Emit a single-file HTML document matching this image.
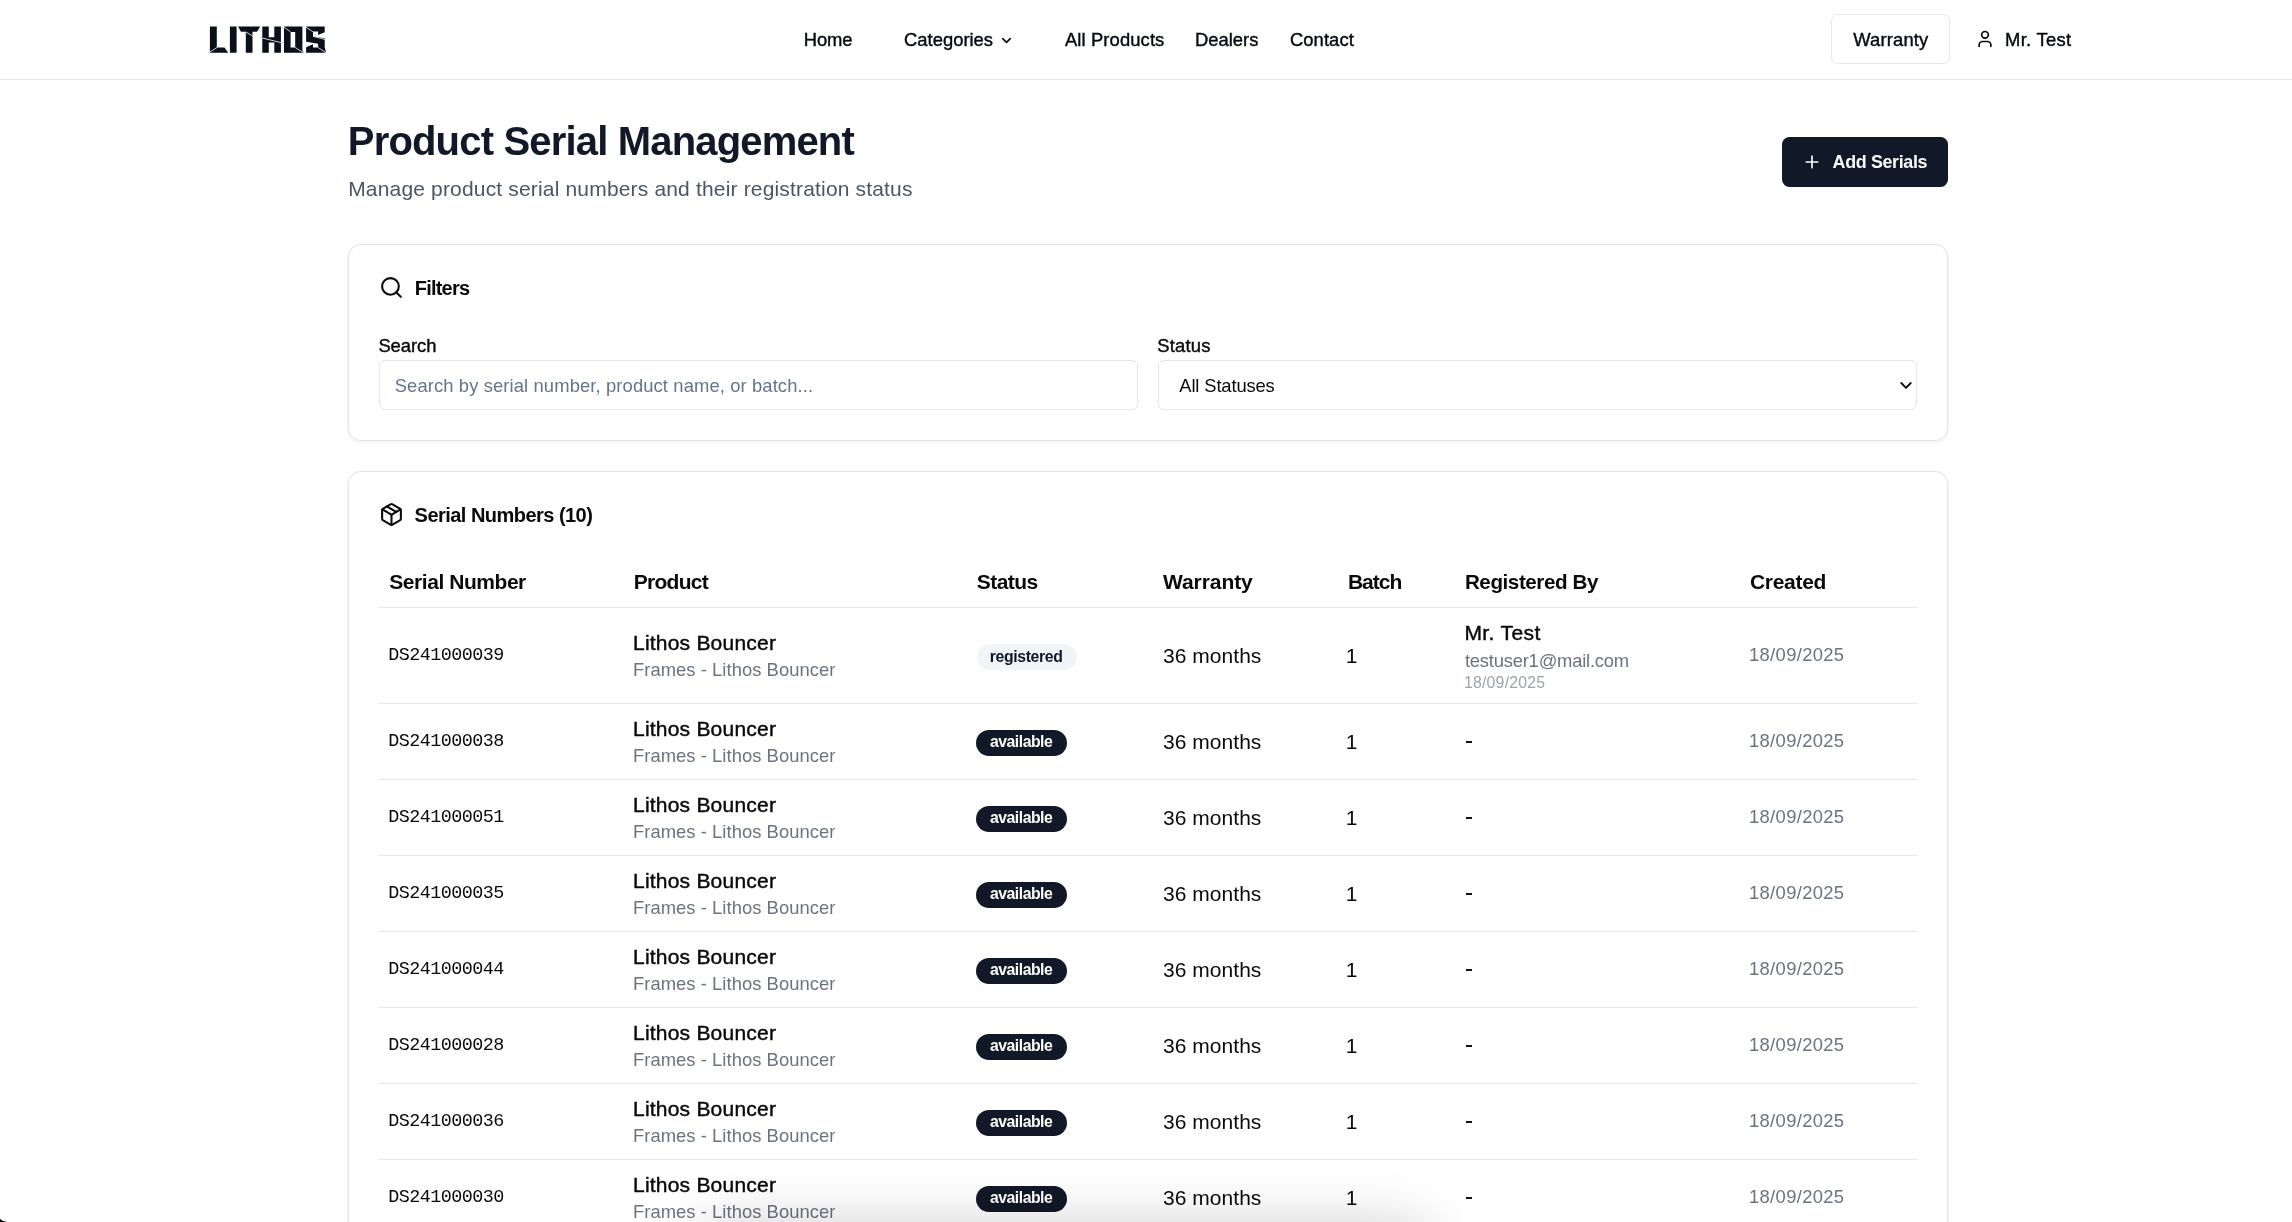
<!DOCTYPE html>
<html><head><meta charset="utf-8"><style>
html,body{margin:0;padding:0;}
body{width:2292px;height:1222px;overflow:hidden;position:relative;background:#fff;font-family:"Liberation Sans",sans-serif;}
#root{position:absolute;left:0;top:0;width:2292px;height:1222px;will-change:transform;}
.abs{position:absolute;}
.t{position:absolute;white-space:nowrap;}
.hl{position:absolute;left:379px;width:1538px;height:1px;background:#e5e7eb;}
.badge{position:absolute;border-radius:20px;}
.dash{position:absolute;left:1465.5px;width:6.6px;height:2px;background:#111;}
.card{position:absolute;left:348px;width:1598px;border:1px solid #e4e4e4;border-radius:13px;background:#fff;box-shadow:0 1px 4px rgba(0,0,0,0.07);}
.inp{position:absolute;border:1px solid #e3e7ec;border-radius:6px;background:#fff;box-sizing:border-box;}
</style></head><body><div id="root">
<div class="abs" style="left:0;top:0;width:2292px;height:79px;border-bottom:1px solid #e5e7eb;background:#fff"></div>
<svg class="abs" style="left:208px;top:26px" width="120" height="28" viewBox="0 0 120 28" fill="#0b0f19">
<path d="M1.9 0.6H8.8V21.4H16.5L20.2 26.8H0.1L1.9 25.7Z M21.9 0.6H28.6V26.8H21.9Z M30.1 0.6H52.3L48.9 5.8H44.5V26.8H37.8V5.8H33Z M54.3 0.6H60.8V11.3H66.3V0.6H72.9V16.2L74.6 16.6L72.9 17V26.8H66.3V16.6H60.8V26.8H54.3V12.3L52.6 11.5L54.3 11.3Z M98.1 0.6H116.7V6.2L110.1 8.9V5.5H105V10.3L116.7 12.3V21.5L118.1 26.8H98.1V21.2L105 18.3V21.5H110.1V17.8L98.1 15.8Z"/>
<path fill-rule="evenodd" d="M76 0.6H94.4V24.5L95.9 26.8H76Z M82.6 6H87.2V21.5H82.6Z"/>
<g stroke="#fff" stroke-width="0.8" stroke-linecap="butt"><line x1="0" y1="27.3" x2="9.4" y2="21.2"/><line x1="37.6" y1="5.9" x2="44.8" y2="10.1"/><line x1="52.6" y1="11.6" x2="74.6" y2="17"/><line x1="75.4" y1="0.7" x2="82.6" y2="5.9"/><line x1="87.2" y1="21.5" x2="96" y2="27"/><line x1="97.4" y1="0.8" x2="105" y2="5.8"/><line x1="105" y1="10.4" x2="116.8" y2="13.4"/><line x1="110.1" y1="21.5" x2="118.3" y2="26.9"/></g>
</svg>
<svg class="abs" style="left:998.7px;top:32.9px" width="15" height="15" viewBox="0 0 24 24" fill="none" stroke="#060912" stroke-width="2.6" stroke-linecap="round" stroke-linejoin="round"><path d="m6 9 6 6 6-6"/></svg>
<div class="abs" style="left:1831px;top:14px;width:119px;height:50px;box-sizing:border-box;border:1px solid #e5e7eb;border-radius:6.5px"></div>
<svg class="abs" style="left:1974.8px;top:29.2px" width="20" height="20" viewBox="0 0 24 24" fill="none" stroke="#060912" stroke-width="2" stroke-linecap="round" stroke-linejoin="round"><path d="M19 21v-2a4 4 0 0 0-4-4H9a4 4 0 0 0-4 4v2"/><circle cx="12" cy="7" r="4"/></svg>
<div class="abs" style="left:1782px;top:137px;width:166px;height:50px;background:#111827;border-radius:7.5px"></div>
<svg class="abs" style="left:1802px;top:151.7px" width="20" height="20" viewBox="0 0 24 24" fill="none" stroke="#f8fafc" stroke-width="2" stroke-linecap="round" stroke-linejoin="round"><path d="M5 12h14"/><path d="M12 5v14"/></svg>
<div class="card" style="top:244px;height:195px"></div>
<svg class="abs" style="left:378.9px;top:274.9px" width="25" height="25" viewBox="0 0 24 24" fill="none" stroke="#0a0a0a" stroke-width="2" stroke-linecap="round" stroke-linejoin="round"><circle cx="11" cy="11" r="8"/><path d="m21 21-4.3-4.3"/></svg>
<div class="inp" style="left:379px;top:360px;width:759px;height:50px"></div>
<div class="inp" style="left:1158px;top:360px;width:759px;height:50px"></div>
<svg class="abs" style="left:1899px;top:379px" width="14" height="14" viewBox="0 0 14 14" fill="none" stroke="#111" stroke-width="1.9" stroke-linecap="round" stroke-linejoin="round"><path d="M2.3 4 7 8.8 11.7 4"/></svg>
<div class="card" style="top:471px;height:900px"></div>
<svg class="abs" style="left:378.7px;top:501.8px" width="25" height="25" viewBox="0 0 24 24" fill="none" stroke="#0a0a0a" stroke-width="2" stroke-linecap="round" stroke-linejoin="round"><path d="M11 21.73a2 2 0 0 0 2 0l7-4A2 2 0 0 0 21 16V8a2 2 0 0 0-1-1.73l-7-4a2 2 0 0 0-2 0l-7 4A2 2 0 0 0 3 8v8a2 2 0 0 0 1 1.73z"/><path d="M12 22V12"/><path d="m3.3 7 7.703 4.734a2 2 0 0 0 1.994 0L20.7 7"/><path d="m7.5 4.27 9 5.15"/></svg>
<div class="hl" style="top:607.0px"></div><div class="hl" style="top:703.0px"></div><div class="hl" style="top:779.0px"></div><div class="hl" style="top:855.0px"></div><div class="hl" style="top:931.0px"></div><div class="hl" style="top:1007.0px"></div><div class="hl" style="top:1083.0px"></div><div class="hl" style="top:1159.0px"></div>
<div class="badge" style="left:976.6px;top:643.9px;width:100.2px;height:25.8px;background:#f1f5f9"></div><div class="badge" style="left:976px;top:729.5px;width:91.1px;height:26.6px;background:#111827"></div><div class="badge" style="left:976px;top:805.5px;width:91.1px;height:26.6px;background:#111827"></div><div class="badge" style="left:976px;top:881.5px;width:91.1px;height:26.6px;background:#111827"></div><div class="badge" style="left:976px;top:957.5px;width:91.1px;height:26.6px;background:#111827"></div><div class="badge" style="left:976px;top:1033.5px;width:91.1px;height:26.6px;background:#111827"></div><div class="badge" style="left:976px;top:1109.5px;width:91.1px;height:26.6px;background:#111827"></div><div class="badge" style="left:976px;top:1185.5px;width:91.1px;height:26.6px;background:#111827"></div>
<div class="dash" style="top:741.1px"></div><div class="dash" style="top:817.1px"></div><div class="dash" style="top:893.1px"></div><div class="dash" style="top:969.1px"></div><div class="dash" style="top:1045.2px"></div><div class="dash" style="top:1121.2px"></div><div class="dash" style="top:1197.2px"></div>
<div class="t" style="left:803.70px;top:30.90px;font-size:18.4px;line-height:18.4px;font-weight:400;color:#060912;letter-spacing:-0.067px;font-family:'Liberation Sans';-webkit-text-stroke:0.4px #060912">Home</div>
<div class="t" style="left:904.10px;top:30.90px;font-size:18.4px;line-height:18.4px;font-weight:400;color:#060912;letter-spacing:0.000px;font-family:'Liberation Sans';-webkit-text-stroke:0.4px #060912">Categories</div>
<div class="t" style="left:1064.90px;top:30.80px;font-size:18.4px;line-height:18.4px;font-weight:400;color:#060912;letter-spacing:0.118px;font-family:'Liberation Sans';-webkit-text-stroke:0.4px #060912">All Products</div>
<div class="t" style="left:1194.90px;top:30.80px;font-size:18.4px;line-height:18.4px;font-weight:400;color:#060912;letter-spacing:0.017px;font-family:'Liberation Sans';-webkit-text-stroke:0.4px #060912">Dealers</div>
<div class="t" style="left:1289.90px;top:30.80px;font-size:18.4px;line-height:18.4px;font-weight:400;color:#060912;letter-spacing:0.083px;font-family:'Liberation Sans';-webkit-text-stroke:0.4px #060912">Contact</div>
<div class="t" style="left:1853.20px;top:31.20px;font-size:18.4px;line-height:18.4px;font-weight:400;color:#060912;letter-spacing:0.171px;font-family:'Liberation Sans';-webkit-text-stroke:0.4px #060912">Warranty</div>
<div class="t" style="left:2005.10px;top:31.20px;font-size:18.4px;line-height:18.4px;font-weight:400;color:#060912;letter-spacing:0.286px;font-family:'Liberation Sans';-webkit-text-stroke:0.4px #060912">Mr. Test</div>
<div class="t" style="left:347.80px;top:121.00px;font-size:40px;line-height:40px;font-weight:700;color:#111827;letter-spacing:-0.825px;font-family:'Liberation Sans'">Product Serial Management</div>
<div class="t" style="left:348.20px;top:177.70px;font-size:21px;line-height:21px;font-weight:400;color:#4b5563;letter-spacing:0.169px;font-family:'Liberation Sans'">Manage product serial numbers and their registration status</div>
<div class="t" style="left:1832.60px;top:154.10px;font-size:17.9px;line-height:17.9px;font-weight:700;color:#f8fafc;letter-spacing:-0.350px;font-family:'Liberation Sans'">Add Serials</div>
<div class="t" style="left:414.80px;top:277.90px;font-size:20px;line-height:20px;font-weight:700;color:#0a0a0a;letter-spacing:-0.800px;font-family:'Liberation Sans'">Filters</div>
<div class="t" style="left:378.40px;top:337.20px;font-size:18.4px;line-height:18.4px;font-weight:400;color:#0a0a0a;letter-spacing:-0.040px;font-family:'Liberation Sans';-webkit-text-stroke:0.4px #0a0a0a">Search</div>
<div class="t" style="left:394.70px;top:376.90px;font-size:18.4px;line-height:18.4px;font-weight:400;color:#64748b;letter-spacing:0.110px;font-family:'Liberation Sans'">Search by serial number, product name, or batch...</div>
<div class="t" style="left:1157.30px;top:337.10px;font-size:18.4px;line-height:18.4px;font-weight:400;color:#0a0a0a;letter-spacing:0.180px;font-family:'Liberation Sans';-webkit-text-stroke:0.4px #0a0a0a">Status</div>
<div class="t" style="left:1179.30px;top:377.10px;font-size:18.4px;line-height:18.4px;font-weight:400;color:#0a0a0a;letter-spacing:-0.145px;font-family:'Liberation Sans'">All Statuses</div>
<div class="t" style="left:414.60px;top:504.50px;font-size:20px;line-height:20px;font-weight:700;color:#0a0a0a;letter-spacing:-0.533px;font-family:'Liberation Sans'">Serial Numbers (10)</div>
<div class="t" style="left:389.30px;top:571.00px;font-size:21px;line-height:21px;font-weight:700;color:#0a0a0a;letter-spacing:-0.450px;font-family:'Liberation Sans'">Serial Number</div>
<div class="t" style="left:633.70px;top:571.00px;font-size:21px;line-height:21px;font-weight:700;color:#0a0a0a;letter-spacing:-0.717px;font-family:'Liberation Sans'">Product</div>
<div class="t" style="left:976.80px;top:571.00px;font-size:21px;line-height:21px;font-weight:700;color:#0a0a0a;letter-spacing:-0.540px;font-family:'Liberation Sans'">Status</div>
<div class="t" style="left:1163.00px;top:571.00px;font-size:21px;line-height:21px;font-weight:700;color:#0a0a0a;letter-spacing:-0.071px;font-family:'Liberation Sans'">Warranty</div>
<div class="t" style="left:1347.90px;top:571.00px;font-size:21px;line-height:21px;font-weight:700;color:#0a0a0a;letter-spacing:-0.975px;font-family:'Liberation Sans'">Batch</div>
<div class="t" style="left:1464.90px;top:572.00px;font-size:20.6px;line-height:20.6px;font-weight:700;color:#0a0a0a;letter-spacing:-0.417px;font-family:'Liberation Sans'">Registered By</div>
<div class="t" style="left:1750.00px;top:571.00px;font-size:21px;line-height:21px;font-weight:700;color:#0a0a0a;letter-spacing:-0.300px;font-family:'Liberation Sans'">Created</div>
<div class="t" style="left:388.30px;top:647.30px;font-size:18.4px;line-height:18.4px;font-weight:400;color:#0a0a0a;letter-spacing:-0.550px;font-family:'Liberation Mono'">DS241000039</div>
<div class="t" style="left:633.00px;top:631.50px;font-size:21px;line-height:21px;font-weight:400;color:#0a0a0a;letter-spacing:0.215px;font-family:'Liberation Sans';-webkit-text-stroke:0.45px #0a0a0a">Lithos Bouncer</div>
<div class="t" style="left:633.00px;top:661.40px;font-size:18.4px;line-height:18.4px;font-weight:400;color:#6b7280;letter-spacing:0.045px;font-family:'Liberation Sans'">Frames - Lithos Bouncer</div>
<div class="t" style="left:989.80px;top:648.80px;font-size:15.8px;line-height:15.8px;font-weight:700;color:#0f172a;letter-spacing:-0.367px;font-family:'Liberation Sans'">registered</div>
<div class="t" style="left:1163.00px;top:644.70px;font-size:21px;line-height:21px;font-weight:400;color:#0a0a0a;letter-spacing:0.037px;font-family:'Liberation Sans'">36 months</div>
<div class="t" style="left:1345.70px;top:644.70px;font-size:21px;line-height:21px;font-weight:400;color:#0a0a0a;letter-spacing:0.000px;font-family:'Liberation Sans'">1</div>
<div class="t" style="left:1464.50px;top:621.60px;font-size:21px;line-height:21px;font-weight:400;color:#0a0a0a;letter-spacing:0.371px;font-family:'Liberation Sans';-webkit-text-stroke:0.45px #0a0a0a">Mr. Test</div>
<div class="t" style="left:1464.90px;top:652.10px;font-size:18.4px;line-height:18.4px;font-weight:400;color:#6b7280;letter-spacing:-0.212px;font-family:'Liberation Sans'">testuser1@mail.com</div>
<div class="t" style="left:1463.90px;top:674.70px;font-size:15.8px;line-height:15.8px;font-weight:400;color:#9ca3af;letter-spacing:0.244px;font-family:'Liberation Sans'">18/09/2025</div>
<div class="t" style="left:1749.00px;top:646.00px;font-size:18.4px;line-height:18.4px;font-weight:400;color:#6b7280;letter-spacing:0.333px;font-family:'Liberation Sans'">18/09/2025</div>
<div class="t" style="left:388.30px;top:733.30px;font-size:18.4px;line-height:18.4px;font-weight:400;color:#0a0a0a;letter-spacing:-0.550px;font-family:'Liberation Mono'">DS241000038</div>
<div class="t" style="left:633.00px;top:717.50px;font-size:21px;line-height:21px;font-weight:400;color:#0a0a0a;letter-spacing:0.215px;font-family:'Liberation Sans';-webkit-text-stroke:0.45px #0a0a0a">Lithos Bouncer</div>
<div class="t" style="left:633.00px;top:747.40px;font-size:18.4px;line-height:18.4px;font-weight:400;color:#6b7280;letter-spacing:0.045px;font-family:'Liberation Sans'">Frames - Lithos Bouncer</div>
<div class="t" style="left:990.00px;top:734.10px;font-size:15.8px;line-height:15.8px;font-weight:700;color:#ffffff;letter-spacing:-0.500px;font-family:'Liberation Sans'">available</div>
<div class="t" style="left:1163.00px;top:730.70px;font-size:21px;line-height:21px;font-weight:400;color:#0a0a0a;letter-spacing:0.037px;font-family:'Liberation Sans'">36 months</div>
<div class="t" style="left:1345.70px;top:730.70px;font-size:21px;line-height:21px;font-weight:400;color:#0a0a0a;letter-spacing:0.000px;font-family:'Liberation Sans'">1</div>
<div class="t" style="left:1749.00px;top:732.00px;font-size:18.4px;line-height:18.4px;font-weight:400;color:#6b7280;letter-spacing:0.333px;font-family:'Liberation Sans'">18/09/2025</div>
<div class="t" style="left:388.30px;top:809.30px;font-size:18.4px;line-height:18.4px;font-weight:400;color:#0a0a0a;letter-spacing:-0.550px;font-family:'Liberation Mono'">DS241000051</div>
<div class="t" style="left:633.00px;top:793.50px;font-size:21px;line-height:21px;font-weight:400;color:#0a0a0a;letter-spacing:0.215px;font-family:'Liberation Sans';-webkit-text-stroke:0.45px #0a0a0a">Lithos Bouncer</div>
<div class="t" style="left:633.00px;top:823.40px;font-size:18.4px;line-height:18.4px;font-weight:400;color:#6b7280;letter-spacing:0.045px;font-family:'Liberation Sans'">Frames - Lithos Bouncer</div>
<div class="t" style="left:990.00px;top:810.10px;font-size:15.8px;line-height:15.8px;font-weight:700;color:#ffffff;letter-spacing:-0.500px;font-family:'Liberation Sans'">available</div>
<div class="t" style="left:1163.00px;top:806.70px;font-size:21px;line-height:21px;font-weight:400;color:#0a0a0a;letter-spacing:0.037px;font-family:'Liberation Sans'">36 months</div>
<div class="t" style="left:1345.70px;top:806.70px;font-size:21px;line-height:21px;font-weight:400;color:#0a0a0a;letter-spacing:0.000px;font-family:'Liberation Sans'">1</div>
<div class="t" style="left:1749.00px;top:808.00px;font-size:18.4px;line-height:18.4px;font-weight:400;color:#6b7280;letter-spacing:0.333px;font-family:'Liberation Sans'">18/09/2025</div>
<div class="t" style="left:388.30px;top:885.30px;font-size:18.4px;line-height:18.4px;font-weight:400;color:#0a0a0a;letter-spacing:-0.550px;font-family:'Liberation Mono'">DS241000035</div>
<div class="t" style="left:633.00px;top:869.50px;font-size:21px;line-height:21px;font-weight:400;color:#0a0a0a;letter-spacing:0.215px;font-family:'Liberation Sans';-webkit-text-stroke:0.45px #0a0a0a">Lithos Bouncer</div>
<div class="t" style="left:633.00px;top:899.40px;font-size:18.4px;line-height:18.4px;font-weight:400;color:#6b7280;letter-spacing:0.045px;font-family:'Liberation Sans'">Frames - Lithos Bouncer</div>
<div class="t" style="left:990.00px;top:886.10px;font-size:15.8px;line-height:15.8px;font-weight:700;color:#ffffff;letter-spacing:-0.500px;font-family:'Liberation Sans'">available</div>
<div class="t" style="left:1163.00px;top:882.70px;font-size:21px;line-height:21px;font-weight:400;color:#0a0a0a;letter-spacing:0.037px;font-family:'Liberation Sans'">36 months</div>
<div class="t" style="left:1345.70px;top:882.70px;font-size:21px;line-height:21px;font-weight:400;color:#0a0a0a;letter-spacing:0.000px;font-family:'Liberation Sans'">1</div>
<div class="t" style="left:1749.00px;top:884.00px;font-size:18.4px;line-height:18.4px;font-weight:400;color:#6b7280;letter-spacing:0.333px;font-family:'Liberation Sans'">18/09/2025</div>
<div class="t" style="left:388.30px;top:961.30px;font-size:18.4px;line-height:18.4px;font-weight:400;color:#0a0a0a;letter-spacing:-0.550px;font-family:'Liberation Mono'">DS241000044</div>
<div class="t" style="left:633.00px;top:945.50px;font-size:21px;line-height:21px;font-weight:400;color:#0a0a0a;letter-spacing:0.215px;font-family:'Liberation Sans';-webkit-text-stroke:0.45px #0a0a0a">Lithos Bouncer</div>
<div class="t" style="left:633.00px;top:975.40px;font-size:18.4px;line-height:18.4px;font-weight:400;color:#6b7280;letter-spacing:0.045px;font-family:'Liberation Sans'">Frames - Lithos Bouncer</div>
<div class="t" style="left:990.00px;top:962.10px;font-size:15.8px;line-height:15.8px;font-weight:700;color:#ffffff;letter-spacing:-0.500px;font-family:'Liberation Sans'">available</div>
<div class="t" style="left:1163.00px;top:958.70px;font-size:21px;line-height:21px;font-weight:400;color:#0a0a0a;letter-spacing:0.037px;font-family:'Liberation Sans'">36 months</div>
<div class="t" style="left:1345.70px;top:958.70px;font-size:21px;line-height:21px;font-weight:400;color:#0a0a0a;letter-spacing:0.000px;font-family:'Liberation Sans'">1</div>
<div class="t" style="left:1749.00px;top:960.00px;font-size:18.4px;line-height:18.4px;font-weight:400;color:#6b7280;letter-spacing:0.333px;font-family:'Liberation Sans'">18/09/2025</div>
<div class="t" style="left:388.30px;top:1037.30px;font-size:18.4px;line-height:18.4px;font-weight:400;color:#0a0a0a;letter-spacing:-0.550px;font-family:'Liberation Mono'">DS241000028</div>
<div class="t" style="left:633.00px;top:1021.50px;font-size:21px;line-height:21px;font-weight:400;color:#0a0a0a;letter-spacing:0.215px;font-family:'Liberation Sans';-webkit-text-stroke:0.45px #0a0a0a">Lithos Bouncer</div>
<div class="t" style="left:633.00px;top:1051.40px;font-size:18.4px;line-height:18.4px;font-weight:400;color:#6b7280;letter-spacing:0.045px;font-family:'Liberation Sans'">Frames - Lithos Bouncer</div>
<div class="t" style="left:990.00px;top:1038.10px;font-size:15.8px;line-height:15.8px;font-weight:700;color:#ffffff;letter-spacing:-0.500px;font-family:'Liberation Sans'">available</div>
<div class="t" style="left:1163.00px;top:1034.70px;font-size:21px;line-height:21px;font-weight:400;color:#0a0a0a;letter-spacing:0.037px;font-family:'Liberation Sans'">36 months</div>
<div class="t" style="left:1345.70px;top:1034.70px;font-size:21px;line-height:21px;font-weight:400;color:#0a0a0a;letter-spacing:0.000px;font-family:'Liberation Sans'">1</div>
<div class="t" style="left:1749.00px;top:1036.00px;font-size:18.4px;line-height:18.4px;font-weight:400;color:#6b7280;letter-spacing:0.333px;font-family:'Liberation Sans'">18/09/2025</div>
<div class="t" style="left:388.30px;top:1113.30px;font-size:18.4px;line-height:18.4px;font-weight:400;color:#0a0a0a;letter-spacing:-0.550px;font-family:'Liberation Mono'">DS241000036</div>
<div class="t" style="left:633.00px;top:1097.50px;font-size:21px;line-height:21px;font-weight:400;color:#0a0a0a;letter-spacing:0.215px;font-family:'Liberation Sans';-webkit-text-stroke:0.45px #0a0a0a">Lithos Bouncer</div>
<div class="t" style="left:633.00px;top:1127.40px;font-size:18.4px;line-height:18.4px;font-weight:400;color:#6b7280;letter-spacing:0.045px;font-family:'Liberation Sans'">Frames - Lithos Bouncer</div>
<div class="t" style="left:990.00px;top:1114.10px;font-size:15.8px;line-height:15.8px;font-weight:700;color:#ffffff;letter-spacing:-0.500px;font-family:'Liberation Sans'">available</div>
<div class="t" style="left:1163.00px;top:1110.70px;font-size:21px;line-height:21px;font-weight:400;color:#0a0a0a;letter-spacing:0.037px;font-family:'Liberation Sans'">36 months</div>
<div class="t" style="left:1345.70px;top:1110.70px;font-size:21px;line-height:21px;font-weight:400;color:#0a0a0a;letter-spacing:0.000px;font-family:'Liberation Sans'">1</div>
<div class="t" style="left:1749.00px;top:1112.00px;font-size:18.4px;line-height:18.4px;font-weight:400;color:#6b7280;letter-spacing:0.333px;font-family:'Liberation Sans'">18/09/2025</div>
<div class="t" style="left:388.30px;top:1189.30px;font-size:18.4px;line-height:18.4px;font-weight:400;color:#0a0a0a;letter-spacing:-0.550px;font-family:'Liberation Mono'">DS241000030</div>
<div class="t" style="left:633.00px;top:1173.50px;font-size:21px;line-height:21px;font-weight:400;color:#0a0a0a;letter-spacing:0.215px;font-family:'Liberation Sans';-webkit-text-stroke:0.45px #0a0a0a">Lithos Bouncer</div>
<div class="t" style="left:633.00px;top:1203.40px;font-size:18.4px;line-height:18.4px;font-weight:400;color:#6b7280;letter-spacing:0.045px;font-family:'Liberation Sans'">Frames - Lithos Bouncer</div>
<div class="t" style="left:990.00px;top:1190.10px;font-size:15.8px;line-height:15.8px;font-weight:700;color:#ffffff;letter-spacing:-0.500px;font-family:'Liberation Sans'">available</div>
<div class="t" style="left:1163.00px;top:1186.70px;font-size:21px;line-height:21px;font-weight:400;color:#0a0a0a;letter-spacing:0.037px;font-family:'Liberation Sans'">36 months</div>
<div class="t" style="left:1345.70px;top:1186.70px;font-size:21px;line-height:21px;font-weight:400;color:#0a0a0a;letter-spacing:0.000px;font-family:'Liberation Sans'">1</div>
<div class="t" style="left:1749.00px;top:1188.00px;font-size:18.4px;line-height:18.4px;font-weight:400;color:#6b7280;letter-spacing:0.333px;font-family:'Liberation Sans'">18/09/2025</div>
<div class="abs" style="left:705px;top:1236px;width:720px;height:60px;border-radius:30px;box-shadow:0 0 60px 10px rgba(0,0,0,0.2)"></div>
<svg class="abs" style="left:0;top:1212px" width="12" height="10"><path d="M0 6.5 Q1 9.2 8 10 L0 10Z" fill="#000"/></svg>
</div></body></html>
